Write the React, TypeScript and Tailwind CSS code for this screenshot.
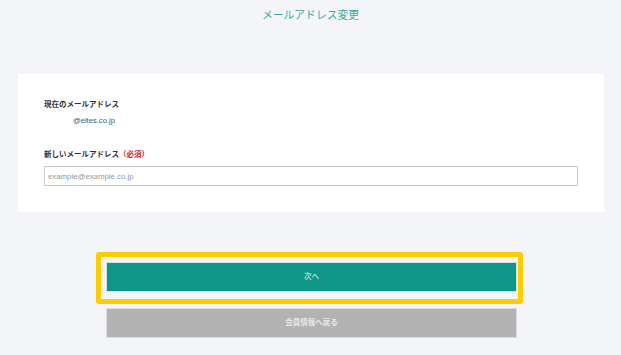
import React from "react";

export default function App() {
  const jp = { fontFamily: '"Liberation Sans", "Noto Sans CJK JP", sans-serif' };
  return (
    <div className="relative w-full h-[355px] bg-[#f4f5f9] overflow-hidden" style={jp}>
      <h1 className="pt-[8px] text-center text-[10.8px] leading-[14px] text-[#3fa8a0] font-normal">
        メールアドレス変更
      </h1>
      <div className="mt-[52px] ml-[18px] mr-[17px] bg-white px-[26px] pt-[26px] pb-[26px]">
        <div className="text-[7.5px] leading-[10px] font-bold text-[#333]">現在のメールアドレス</div>
        <div className="mt-[6px] pl-[29px] text-[7.6px] leading-[10px] text-[#555]">@eltes.co.jp</div>
        <div className="mt-[24px] text-[7.5px] leading-[10px] font-bold text-[#333]">
          新しいメールアドレス<span className="text-[#e0202e]">（必須）</span>
        </div>
        <input
          className="mt-[6px] block w-full h-[20px] border border-[#cccccc] pl-[3px] text-[7.8px] text-[#555] placeholder:text-[#9a9a9a] outline-none"
          placeholder="example@example.co.jp"
          style={jp}
        />
      </div>
      <div className="mt-[50px] ml-[106px] w-[411px] flex flex-col gap-[16px]">
        <button className="h-[30px] w-full bg-[#0e9688] border border-[#cfe3e1] text-[7.5px] text-[#e8f4f3]" style={jp}>
          次へ
        </button>
        <button className="h-[30px] w-full bg-[#b3b3b3] border border-[#dcdcdc] text-[7.5px] font-bold text-[#e8e8e8]" style={jp}>
          会員情報へ戻る
        </button>
      </div>
      <div className="absolute left-[96px] top-[252px] w-[427px] h-[52px] border-[5px] border-[#ffcc00] rounded-[3px] pointer-events-none" />
    </div>
  );
}
